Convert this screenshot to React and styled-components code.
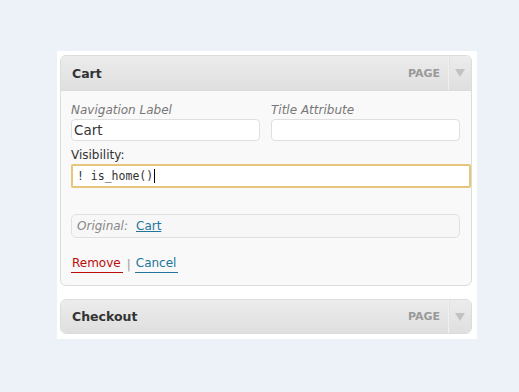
import React from "react";
import styled, { createGlobalStyle } from "styled-components";

const Global = createGlobalStyle`
  html, body { margin: 0; padding: 0; background: #edf1f8; }
  body { font-family: "DejaVu Sans", Verdana, sans-serif; }
`;

const Page = styled.div`
  width: 519px;
  height: 392px;
  padding: 51px 0 0 57px;
  box-sizing: border-box;
`;

const Panel = styled.div`
  width: 420px;
  background: #fff;
  box-sizing: border-box;
  padding: 4px 5px 5px 3px;
  display: flex;
  flex-direction: column;
  gap: 13px;
`;

const Item = styled.div`
  border: 1px solid #dcdcdc;
  border-radius: 6px;
  background: #f9f9f9;
  overflow: hidden;
`;

const Header = styled.div`
  height: ${(p) => (p.$open ? 34 : 33)}px;
  display: flex;
  align-items: center;
  background: linear-gradient(#ececec, #dfdfdf);
  border-bottom: ${(p) => (p.$open ? "1px solid #dcdcdc" : "none")};
`;

const Title = styled.span`
  flex: 1;
  padding-left: 11px;
  font-size: 12.5px;
  font-weight: bold;
  color: #333;
`;

const Kind = styled.span`
  font-size: 11px;
  font-weight: bold;
  color: #999;
  padding-right: 8px;
`;

const Toggle = styled.span`
  width: 22px;
  align-self: stretch;
  border-left: 1px solid #f0f0f0;
  box-shadow: inset 1px 0 0 #e2e2e2;
  display: flex;
  align-items: center;
  justify-content: center;
`;

const Body = styled.div`
  padding: 12px 1px 12px 10px;
  display: flex;
  flex-direction: column;
`;

const Row = styled.div`
  display: flex;
  gap: 11px;
`;

const Field = styled.label`
  display: flex;
  flex-direction: column;
  width: ${(p) => p.$w}px;
  margin-top: ${(p) => p.$mt || 0}px;
`;

const LabelText = styled.span`
  font-size: 12px;
  font-style: ${(p) => (p.$italic ? "italic" : "normal")};
  color: ${(p) => (p.$italic ? "#777" : "#333")};
  line-height: 15px;
  margin-bottom: 1px;
`;

const Input = styled.div`
  box-sizing: border-box;
  height: ${(p) => (p.$h ? p.$h : 22)}px;
  border: ${(p) => (p.$focus ? "2px solid #e6c679" : "1px solid #dfdfdf")};
  border-radius: ${(p) => (p.$focus ? 2 : 4)}px;
  background: #fff;
  display: flex;
  align-items: center;
  padding-left: ${(p) => (p.$focus ? 4 : 2)}px;
  font-family: ${(p) => (p.$mono ? '"DejaVu Sans Mono", monospace' : '"DejaVu Sans", sans-serif')};
  font-size: ${(p) => (p.$mono ? 11.5 : 13.5)}px;
  color: #333;
`;

const Caret = styled.span`
  display: inline-block;
  width: 1px;
  height: 14px;
  background: #000;
  margin-left: 1px;
`;

const Original = styled.div`
  margin-top: 26px;
  width: 389px;
  height: 24px;
  box-sizing: border-box;
  border: 1px solid #e0e0e0;
  border-radius: 5px;
  background: #f7f7f7;
  display: flex;
  align-items: center;
  padding-left: 5px;
  gap: 8px;
  font-size: 12px;
`;

const Muted = styled.span`
  font-style: italic;
  color: #888;
`;

const Link = styled.a`
  color: ${(p) => (p.$danger ? "#bc0b0b" : "#21759b")};
  text-decoration: ${(p) => (p.$plain ? "underline" : "none")};
  border-bottom: ${(p) => (p.$plain ? "none" : `1px solid ${p.$danger ? "#bc0b0b" : "#21759b"}`)};
  padding: ${(p) => (p.$plain ? "0" : "0 2px 2px 1px")};
  cursor: pointer;
`;

const Actions = styled.div`
  margin-top: 18px;
  display: flex;
  align-items: center;
  font-size: 12px;
  gap: 3px;
`;

const Sep = styled.span`
  color: #999;
  margin: 0 1px;
  font-size: 12px;
`;

const Arrow = () => (
  <svg width="10" height="8" viewBox="0 0 10 8">
    <path d="M0 0 L10 0 L5 8 Z" fill="#c2c2c2" />
  </svg>
);

export default function App() {
  return (
    <>
      <Global />
      <Page>
        <Panel>
          <Item>
            <Header $open>
              <Title>Cart</Title>
              <Kind>PAGE</Kind>
              <Toggle><Arrow /></Toggle>
            </Header>
            <Body>
              <Row>
                <Field $w={189}>
                  <LabelText $italic>Navigation Label</LabelText>
                  <Input>Cart</Input>
                </Field>
                <Field $w={189}>
                  <LabelText $italic>Title Attribute</LabelText>
                  <Input />
                </Field>
              </Row>
              <Field $w={400} $mt={7}>
                <LabelText>Visibility:</LabelText>
                <Input $focus $mono $h={24}>! is_home()<Caret /></Input>
              </Field>
              <Original>
                <Muted>Original:</Muted>
                <Link $plain>Cart</Link>
              </Original>
              <Actions>
                <Link $danger>Remove</Link>
                <Sep>|</Sep>
                <Link>Cancel</Link>
              </Actions>
            </Body>
          </Item>
          <Item>
            <Header>
              <Title>Checkout</Title>
              <Kind>PAGE</Kind>
              <Toggle><Arrow /></Toggle>
            </Header>
          </Item>
        </Panel>
      </Page>
    </>
  );
}
